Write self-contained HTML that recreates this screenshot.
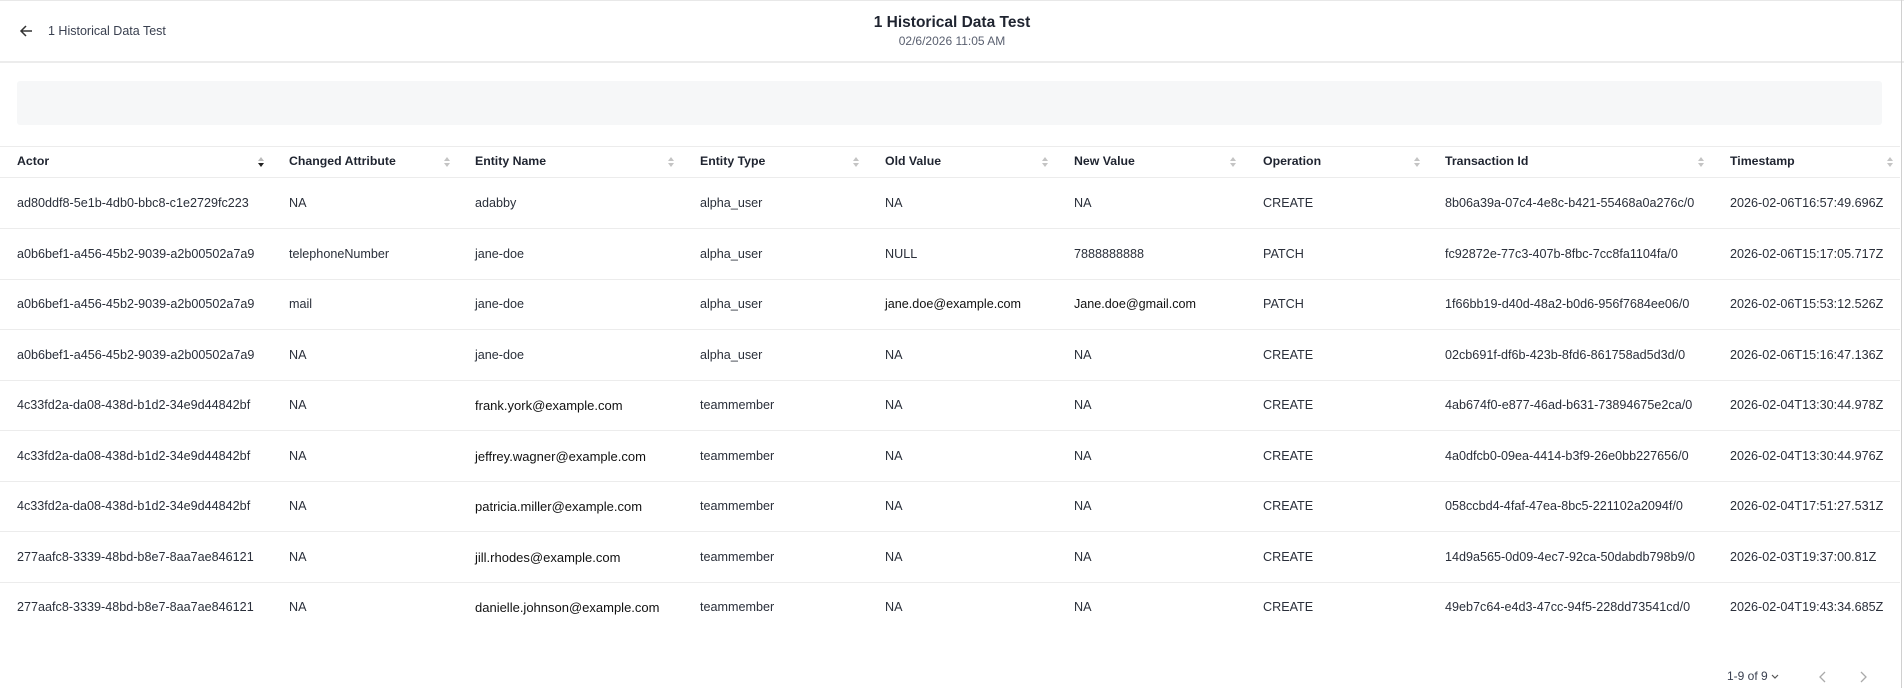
<!DOCTYPE html>
<html><head><meta charset="utf-8"><style>
*{margin:0;padding:0;box-sizing:border-box}
body{width:1904px;height:688px;overflow:hidden;background:#fff;font-family:"Liberation Sans",sans-serif;color:#1f2430;position:relative}
.top{position:absolute;left:0;top:0;width:1904px;height:63px;border-top:1px solid #e8e8e8;border-bottom:2px solid #ececec}
.rb{position:absolute;right:2px;top:0;width:1px;height:688px;background:#d0d0d0}
.back{position:absolute;left:18px;top:23px}
.crumb{position:absolute;left:48px;top:24px;font-size:12.5px;color:#3a4050}
.title{position:absolute;left:0;width:1904px;text-align:center;top:14px;font-size:15.5px;font-weight:bold;color:#1f2430}
.date{position:absolute;left:0;width:1904px;text-align:center;top:34px;font-size:12px;color:#5a6070}
.gbox{position:absolute;left:17px;top:81px;width:1865px;height:44px;background:#f6f7f8;border-radius:3px}
.hline{position:absolute;left:0;width:1900px;height:1px;background:#ececec}
.c{position:absolute;font-size:12.6px;color:#2a2f3a;white-space:nowrap;letter-spacing:0}
.h{font-weight:bold;font-size:12.3px;color:#1f2430}
.s{position:absolute;width:8px;height:12px}
.pg{position:absolute;top:669px;font-size:12px;color:#3a4050}
</style></head><body>
<div class="top"></div>
<div class="rb"></div>
<svg class="back" width="16" height="16" viewBox="0 0 16 16"><path d="M14 8H3M8 3L3 8l5 5" stroke="#333" stroke-width="1.5" fill="none"/></svg>
<div class="crumb">1 Historical Data Test</div>
<div class="title">1 Historical Data Test</div>
<div class="date">02/6/2026 11:05 AM</div>
<div class="gbox"></div>
<div class="hline" style="top:146px"></div>
<div class="hline" style="top:177px"></div>
<div id="t"></div>
<div class="pg" style="left:1727px">1-9 of 9 <svg width="8" height="6" viewBox="0 0 8 6"><path d="M1 1l3 3 3-3" stroke="#555" stroke-width="1.2" fill="none"/></svg></div>
<svg style="position:absolute;left:1818px;top:670px" width="10" height="14" viewBox="0 0 10 14"><path d="M7 2L2 7l5 5" stroke="#aaa" stroke-width="1.3" fill="none"/></svg>
<svg style="position:absolute;left:1858px;top:670px" width="10" height="14" viewBox="0 0 10 14"><path d="M3 2l5 5-5 5" stroke="#aaa" stroke-width="1.3" fill="none"/></svg>
<script>
var xs=[17,289,475,700,885,1074,1263,1445,1730];
var ss=[261,447,671,856,1045,1233,1417,1701,1890];
var hd=["Actor","Changed Attribute","Entity Name","Entity Type","Old Value","New Value","Operation","Transaction Id","Timestamp"];
var rows=[
["ad80ddf8-5e1b-4db0-bbc8-c1e2729fc223","NA","adabby","alpha_user","NA","NA","CREATE","8b06a39a-07c4-4e8c-b421-55468a0a276c/0","2026-02-06T16:57:49.696Z"],
["a0b6bef1-a456-45b2-9039-a2b00502a7a9","telephoneNumber","jane-doe","alpha_user","NULL","7888888888","PATCH","fc92872e-77c3-407b-8fbc-7cc8fa1104fa/0","2026-02-06T15:17:05.717Z"],
["a0b6bef1-a456-45b2-9039-a2b00502a7a9","mail","jane-doe","alpha_user","jane.doe@example.com","Jane.doe@gmail.com","PATCH","1f66bb19-d40d-48a2-b0d6-956f7684ee06/0","2026-02-06T15:53:12.526Z"],
["a0b6bef1-a456-45b2-9039-a2b00502a7a9","NA","jane-doe","alpha_user","NA","NA","CREATE","02cb691f-df6b-423b-8fd6-861758ad5d3d/0","2026-02-06T15:16:47.136Z"],
["4c33fd2a-da08-438d-b1d2-34e9d44842bf","NA","frank.york@example.com","teammember","NA","NA","CREATE","4ab674f0-e877-46ad-b631-73894675e2ca/0","2026-02-04T13:30:44.978Z"],
["4c33fd2a-da08-438d-b1d2-34e9d44842bf","NA","jeffrey.wagner@example.com","teammember","NA","NA","CREATE","4a0dfcb0-09ea-4414-b3f9-26e0bb227656/0","2026-02-04T13:30:44.976Z"],
["4c33fd2a-da08-438d-b1d2-34e9d44842bf","NA","patricia.miller@example.com","teammember","NA","NA","CREATE","058ccbd4-4faf-47ea-8bc5-221102a2094f/0","2026-02-04T17:51:27.531Z"],
["277aafc8-3339-48bd-b8e7-8aa7ae846121","NA","jill.rhodes@example.com","teammember","NA","NA","CREATE","14d9a565-0d09-4ec7-92ca-50dabdb798b9/0","2026-02-03T19:37:00.81Z"],
["277aafc8-3339-48bd-b8e7-8aa7ae846121","NA","danielle.johnson@example.com","teammember","NA","NA","CREATE","49eb7c64-e4d3-47cc-94f5-228dd73541cd/0","2026-02-04T19:43:34.685Z"]];
var h="";
for(var i=0;i<9;i++){
h+='<div class="c h" style="left:'+xs[i]+'px;top:154px">'+hd[i]+'</div>';
var up=i==0?"#bbb":"#c4c4c4",dn=i==0?"#222":"#c4c4c4";
h+='<svg class="s" style="left:'+(ss[i]-4)+'px;top:156px" viewBox="0 0 8 12"><path d="M1 5L4 1L7 5Z" fill="'+up+'"/><path d="M1 7L4 11L7 7Z" fill="'+dn+'"/></svg>';
}
for(var r=0;r<9;r++){
var cy=203+r*50.5;
if(r<8)h+='<div class="hline" style="top:'+Math.round(cy+25)+'px"></div>';
for(var i=0;i<9;i++){
var big=(i==2&&r>=4);
var dark=(r==2&&(i==4||i==5));
h+='<div class="c" style="left:'+xs[i]+'px;top:'+Math.round(cy-7)+'px;'+(big?'font-size:13px;color:#111;':'')+(dark?'color:#111;':'')+'">'+rows[r][i]+'</div>';
}}
document.getElementById("t").innerHTML=h;
</script>
</body></html>
